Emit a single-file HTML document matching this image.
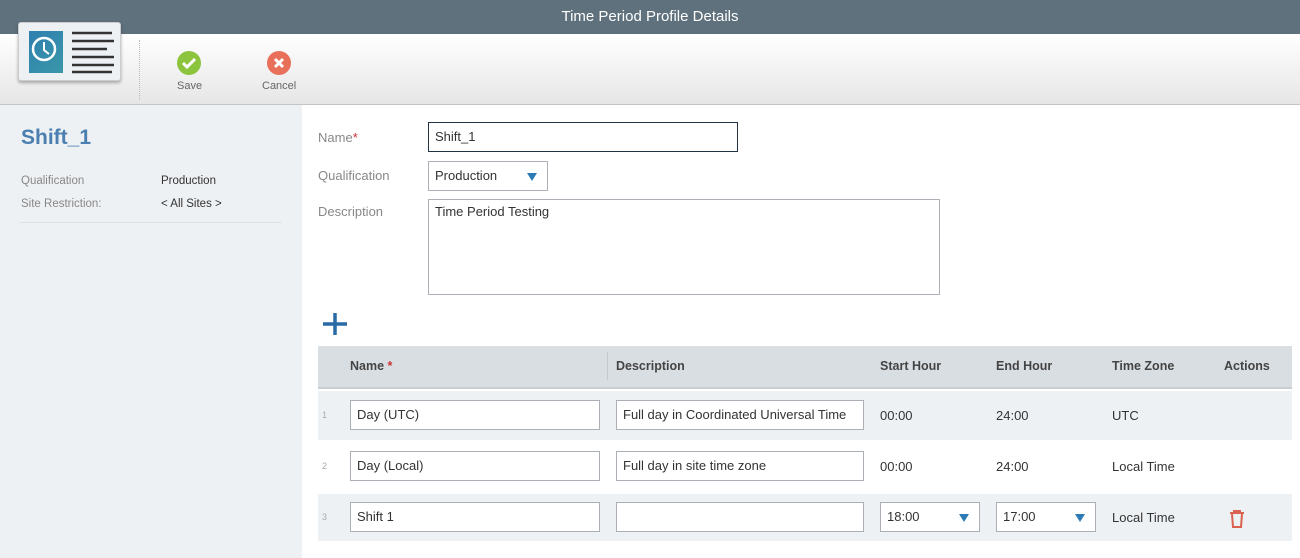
<!DOCTYPE html>
<html><head><style>
*{box-sizing:border-box;margin:0;padding:0}
body{width:1300px;height:558px;overflow:hidden;font-family:"Liberation Sans",Arial,sans-serif;background:#fff;position:relative;font-size:13px;color:#333}
.a{position:absolute}
.hdr{left:0;top:0;width:1300px;height:34px;background:#5f717d;color:#fff;font-size:15px;text-align:center;line-height:34px}
.tb{left:0;top:34px;width:1300px;height:71px;background:linear-gradient(#fff,#e6e6e6);border-bottom:1px solid #c4c4c4}
.left{left:0;top:105px;width:302px;height:453px;background:#eef1f4}
.lbl{color:#888;font-size:13px}
.inp{position:absolute;border:1px solid #aab0b5;background:#fff;height:30px;line-height:28px;padding-left:6px;font-size:13px;color:#333}
.th{font-weight:bold;color:#444;font-size:12.5px}
.arr{position:absolute;right:10px;top:11px;width:0;height:0;border-left:5px solid transparent;border-right:5px solid transparent;border-top:8px solid #2c7bb5}
</style></head><body>
<div class="a hdr">Time Period Profile Details</div>
<div class="a tb"></div>
<div class="a" style="left:18px;top:22px;width:103px;height:59px;background:#eef1f4;border:1px solid #ccc;border-radius:3px;box-shadow:0 2px 3px rgba(0,0,0,.3)">
 <div class="a" style="left:10px;top:8px;width:34px;height:42px;background:linear-gradient(135deg,#2e7fb0,#3a98a8)">
  <svg width="34" height="42"><circle cx="15" cy="18" r="11" fill="none" stroke="#fff" stroke-width="2.5"/><path d="M15 11v8l5 4" stroke="#fff" stroke-width="2" fill="none"/></svg>
 </div>
 <svg class="a" style="left:51px;top:8px" width="44" height="44"><g stroke="#333" stroke-width="2.5"><path d="M2 2h40M2 10h43M2 18h35M2 26h43M2 34h43M2 41h40"/></g></svg>
</div>
<div class="a" style="left:139px;top:40px;height:60px;border-left:1px dotted #bbb"></div>
<svg class="a" style="left:177px;top:51px" width="24" height="24"><circle cx="12" cy="12" r="12" fill="#8cc43e"/><path d="M6 12l4 4 8-8" stroke="#fff" stroke-width="3" fill="none"/></svg>
<div class="a" style="left:177px;top:80px;font-size:11px;color:#666">Save</div>
<svg class="a" style="left:267px;top:51px" width="24" height="24"><circle cx="12" cy="12" r="12" fill="#e8705a"/><path d="M8 8l8 8M16 8l-8 8" stroke="#fff" stroke-width="3"/></svg>
<div class="a" style="left:262px;top:80px;font-size:11px;color:#666">Cancel</div>

<div class="a left"></div>
<div class="a" style="left:21px;top:126px;font-size:21px;font-weight:bold;color:#4a7fb0">Shift_1</div>
<div class="a lbl" style="left:21px;top:175px;font-size:11.5px">Qualification</div>
<div class="a" style="left:161px;top:175px;font-size:11.5px">Production</div>
<div class="a lbl" style="left:21px;top:198px;font-size:11.5px">Site Restriction:</div>
<div class="a" style="left:161px;top:198px;font-size:11.5px">&lt; All Sites &gt;</div>
<div class="a" style="left:20px;top:222px;width:262px;border-top:1px solid #dde1e5"></div>

<div class="a lbl" style="left:318px;top:130px">Name<span style="color:#c33">*</span></div>
<div class="inp" style="left:428px;top:122px;width:310px;border-color:#234;">Shift_1</div>
<div class="a lbl" style="left:318px;top:168px">Qualification</div>
<div class="inp" style="left:428px;top:161px;width:120px">Production<div class="arr"></div></div>
<div class="a lbl" style="left:318px;top:204px">Description</div>
<div class="inp" style="left:428px;top:199px;width:512px;height:96px;line-height:24px">Time Period Testing</div>
<svg class="a" style="left:322px;top:312px" width="26" height="24"><path d="M13 1v22M1 12h24" stroke="#2a6aa5" stroke-width="3.5"/></svg>

<div class="a" style="left:318px;top:346px;width:974px;height:43px;background:#d9dee2;border-bottom:2px solid #c8cdd1"></div>
<div class="a" style="left:607px;top:352px;height:28px;border-left:1px solid #c4c9cd"></div>
<div class="a th" style="left:350px;top:359px">Name <span style="color:#c33">*</span></div>
<div class="a th" style="left:616px;top:359px">Description</div>
<div class="a th" style="left:880px;top:359px">Start Hour</div>
<div class="a th" style="left:996px;top:359px">End Hour</div>
<div class="a th" style="left:1112px;top:359px">Time Zone</div>
<div class="a th" style="left:1224px;top:359px">Actions</div>

<div class="a" style="left:318px;top:391px;width:974px;height:49px;background:#eef1f4"></div>
<div class="a" style="left:318px;top:494px;width:974px;height:47px;background:#eef1f4"></div>

<div class="a" style="left:322px;top:410px;font-size:9px;color:#aaa">1</div>
<div class="inp" style="left:350px;top:400px;width:250px">Day (UTC)</div>
<div class="inp" style="left:616px;top:400px;width:248px">Full day in Coordinated Universal Time</div>
<div class="a" style="left:880px;top:408px">00:00</div>
<div class="a" style="left:996px;top:408px">24:00</div>
<div class="a" style="left:1112px;top:408px">UTC</div>

<div class="a" style="left:322px;top:461px;font-size:9px;color:#aaa">2</div>
<div class="inp" style="left:350px;top:451px;width:250px">Day (Local)</div>
<div class="inp" style="left:616px;top:451px;width:248px">Full day in site time zone</div>
<div class="a" style="left:880px;top:459px">00:00</div>
<div class="a" style="left:996px;top:459px">24:00</div>
<div class="a" style="left:1112px;top:459px">Local Time</div>

<div class="a" style="left:322px;top:512px;font-size:9px;color:#aaa">3</div>
<div class="inp" style="left:350px;top:502px;width:250px">Shift 1</div>
<div class="inp" style="left:616px;top:502px;width:248px"></div>
<div class="inp" style="left:880px;top:502px;width:100px">18:00<div class="arr"></div></div>
<div class="inp" style="left:996px;top:502px;width:100px">17:00<div class="arr"></div></div>
<div class="a" style="left:1112px;top:510px">Local Time</div>
<svg class="a" style="left:1229px;top:510px" width="16" height="18"><g fill="none" stroke="#d9634e" stroke-width="2"><path d="M1 3h14M5 3V1h6v2M3 4l1 13h8l1-13"/></g></svg>
</body></html>
